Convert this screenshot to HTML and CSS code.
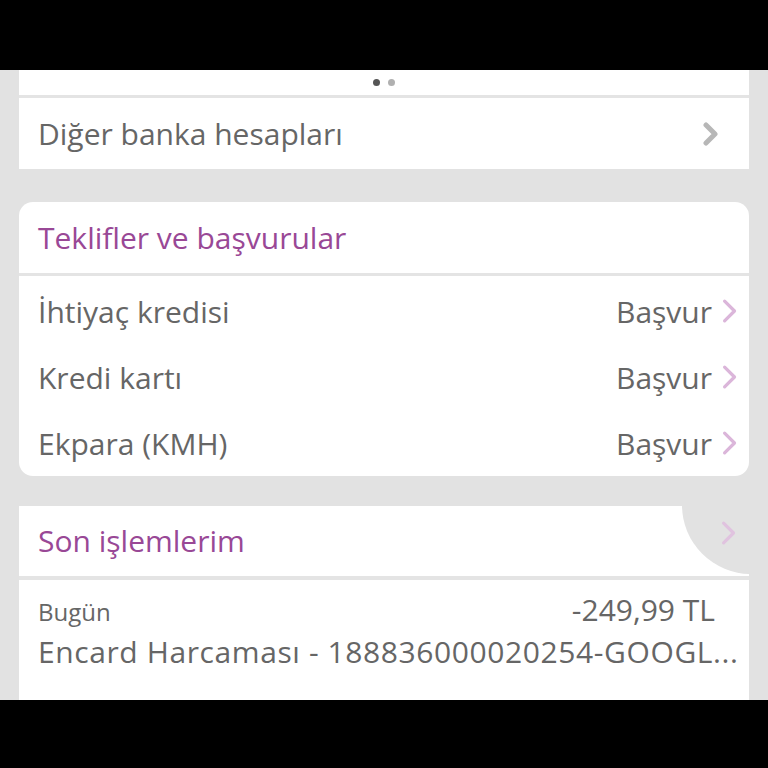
FILE: index.html
```html
<!DOCTYPE html>
<html lang="tr">
<head>
    <meta charset="UTF-8">
    <meta name="viewport" content="width=device-width, initial-scale=1.0">
    <title>Hesaplarım</title>
    <link rel="stylesheet" href="styles.css">
</head>
<body>
    <div class="screen">
        <div class="bar"></div>

        <main class="content">
            <section class="card flat">
                <div class="dots"><span class="dot active"></span><span class="dot"></span></div>
                <div class="row link">
                    <span>Diğer banka hesapları</span>
                    <svg class="chev grey" viewBox="0 0 20 24"><path d="M5 3l9 9-9 9"/></svg>
                </div>
            </section>

            <section class="card">
                <h2 class="title">Teklifler ve başvurular</h2>
                <ul class="offers">
                    <li><span>İhtiyaç kredisi</span><span class="apply">Başvur <svg class="chev pink" viewBox="0 0 20 28"><path d="M4 3l11 11-11 11"/></svg></span></li>
                    <li><span>Kredi kartı</span><span class="apply">Başvur <svg class="chev pink" viewBox="0 0 20 28"><path d="M4 3l11 11-11 11"/></svg></span></li>
                    <li><span>Ekpara (KMH)</span><span class="apply">Başvur <svg class="chev pink" viewBox="0 0 20 28"><path d="M4 3l11 11-11 11"/></svg></span></li>
                </ul>
            </section>

            <section class="card flat last">
                <div class="title-row">
                    <h2 class="title">Son işlemlerim</h2>
                    <span class="swipe"></span>
                    <svg class="chev pink faint" viewBox="0 0 20 28"><path d="M4 3l11 11-11 11"/></svg>
                </div>
                <div class="tx">
                    <div class="tx-top"><span class="tx-date">Bugün</span><span class="tx-amount">-249,99 TL</span></div>
                    <div class="tx-desc">Encard Harcaması - 188836000020254-GOOGL...</div>
                </div>
            </section>
        </main>

        <div class="bar bottom"></div>
    </div>
</body>
</html>
```

FILE: styles.css
```css
body {
    margin: 0;
    background: #000;
    font-family: "Open Sans", "Noto Sans", sans-serif;
    color: #666;
}
.screen {
    width: 768px;
    height: 768px;
    display: flex;
    flex-direction: column;
}
.bar {
    height: 70px;
    background: #000;
    flex: none;
}
.bar.bottom {
    height: 68px;
}
.content {
    flex: 1;
    background: #e2e2e2;
    padding: 0 19px;
    overflow: hidden;
}
.card {
    background: #fff;
    border-radius: 14px;
    margin-bottom: 30px;
    overflow: hidden;
}
.card.flat {
    border-radius: 0;
    margin-bottom: 33px;
}
.card.last {
    margin-bottom: 0;
}
.dots {
    height: 25px;
    display: flex;
    justify-content: center;
    align-items: center;
    gap: 8px;
    border-bottom: 3px solid #e4e4e4;
}
.dot {
    width: 7px;
    height: 7px;
    border-radius: 50%;
    background: #b0b0b0;
}
.dot.active {
    background: #555;
}
.row {
    height: 71px;
    display: flex;
    align-items: center;
    justify-content: space-between;
    padding: 0 28px 0 19px;
    font-size: 30px;
}
.chev {
    fill: none;
    stroke-linecap: round;
    stroke-linejoin: round;
}
.chev.grey {
    width: 20px;
    height: 24px;
    stroke: #b7b7b7;
    stroke-width: 5;
}
.chev.pink {
    width: 18px;
    height: 30px;
    stroke: #dbb6da;
    stroke-width: 3.6;
}
.title {
    margin: 0;
    height: 71px;
    line-height: 71px;
    padding-left: 19px;
    font-size: 30px;
    font-weight: normal;
    color: #994896;
    border-bottom: 3px solid #e4e4e4;
}
.offers {
    list-style: none;
    margin: 0;
    padding: 2px 0 0;
}
.offers li {
    height: 66px;
    display: flex;
    align-items: center;
    justify-content: space-between;
    padding: 0 10px 0 19px;
    font-size: 30px;
}
.apply {
    display: flex;
    align-items: center;
    gap: 9px;
}
.title-row {
    position: relative;
}
.title-row .title {
    height: 70px;
    line-height: 70px;
    border-bottom-width: 4px;
}
.swipe {
    position: absolute;
    left: 663px;
    top: -70px;
    width: 138px;
    height: 138px;
    border-radius: 50%;
    background: #e2e2e2;
}
.title-row .chev {
    position: absolute;
    right: 11px;
    top: 12px;
}
.chev.faint {
    stroke: #e0c3df;
}
.tx {
    padding: 9px 11px 0 19px;
    height: 120px;
}
.tx-top {
    display: flex;
    justify-content: space-between;
    align-items: baseline;
    padding-right: 23px;
}
.tx-date {
    font-size: 24px;
}
.tx-amount {
    font-size: 30px;
}
.tx-desc {
    font-size: 30px;
    letter-spacing: 0.6px;
    white-space: nowrap;
    overflow: hidden;
    margin-top: 1px;
}
```
